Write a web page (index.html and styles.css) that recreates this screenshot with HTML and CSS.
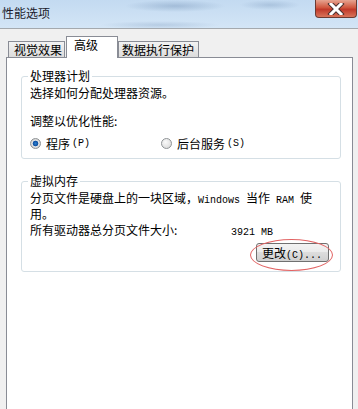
FILE: index.html
```html
<!DOCTYPE html>
<html lang="zh-CN">

<head>
    <meta charset="UTF-8">
    <meta name="viewport" content="width=device-width, initial-scale=1.0">
    <title>性能选项</title>
    <link rel="stylesheet" href="styles.css">
</head>

<body>
    <div class="titlebar">
        <span class="title">性能选项</span>
        <span class="close">
            <svg width="20" height="12" viewBox="0 0 20 12">
                <path d="M5 1 L15 11 M15 1 L5 11" stroke="#4a3030" stroke-width="5" stroke-linecap="square" />
                <path d="M5 1 L15 11 M15 1 L5 11" stroke="#ffffff" stroke-width="3" stroke-linecap="square" />
            </svg>
        </span>
    </div>

    <div class="tabs">
        <span class="tab">视觉效果</span>
        <span class="tab active">高级</span>
        <span class="tab last">数据执行保护</span>
    </div>

    <div class="panel">
        <fieldset class="group">
            <legend>处理器计划</legend>
            <p class="line first">选择如何分配处理器资源。</p>
            <p class="line label">调整以优化性能:</p>
            <div class="radios">
                <label class="radio"><span class="dot checked"></span>程序<span class="en">(P)</span></label>
                <label class="radio second"><span class="dot"></span>后台服务<span class="en">(S)</span></label>
            </div>
        </fieldset>

        <fieldset class="group memory">
            <legend>虚拟内存</legend>
            <p class="line">分页文件是硬盘上的一块区域，<span class="en">Windows </span>当作<span class="en"> RAM </span>使<br>用。</p>
            <p class="line total"><span class="size-label">所有驱动器总分页文件大小:</span><span class="en">3921 MB</span></p>
            <div class="actions">
                <button class="btn">更改<span class="en">(C)...</span><span class="mark"></span></button>
            </div>
        </fieldset>
    </div>
</body>

</html>
```

FILE: styles.css
```css
body {
    margin: 0;
    background-color: #f0f0f0;
    font-family: "Noto Sans CJK SC", sans-serif;
    font-size: 12px;
    line-height: 15px;
    color: #000;
    overflow: hidden;
}

.en {
    font-family: "Liberation Mono", monospace;
    font-size: 10px;
    line-height: 10px;
    white-space: pre;
}

.titlebar {
    height: 28px;
    display: flex;
    justify-content: space-between;
    align-items: flex-start;
    border-bottom: 1px solid #a4a9ae;
    background:
        radial-gradient(ellipse 50px 6px at 175px 6px, rgba(120, 150, 185, .45), transparent),
        radial-gradient(ellipse 30px 5px at 270px 5px, rgba(120, 150, 185, .35), transparent),
        radial-gradient(ellipse 60px 4px at 160px 25px, rgba(120, 150, 185, .3), transparent),
        linear-gradient(#c3daf1, #d3e5f6);
}

.title {
    margin: 5px 0 0 2px;
    color: #1a1a2a;
}

.close {
    width: 42px;
    height: 18px;
    margin-right: 1px;
    display: flex;
    justify-content: center;
    align-items: center;
    border: 1px solid #6b3a32;
    border-top: none;
    border-radius: 0 0 4px 4px;
    box-sizing: border-box;
    background: linear-gradient(#e6a491, #d0563e 45%, #c0392a 55%, #d9745a);
}

.tabs {
    display: flex;
    align-items: flex-end;
    margin: 7px 0 0 8px;
    position: relative;
    z-index: 1;
    white-space: nowrap;
}

.tab {
    width: 57px;
    height: 16px;
    padding: 0 0 0 5px;
    box-sizing: border-box;
    border: 1px solid #898c95;
    border-bottom: none;
    background: linear-gradient(#f2f2f2, #dcdcdc);
    line-height: 16px;
}

.tab.active {
    height: 22px;
    width: 52px;
    margin: 0 0 -1px 1px;
    padding-left: 7px;
    background: #fff;
}

.tab.last {
    width: 81px;
    padding-left: 3px;
}

.panel {
    margin-left: 6px;
    width: 347px;
    height: 360px;
    box-sizing: border-box;
    border: 1px solid #898c95;
    border-bottom: none;
    background: #fff;
    padding: 11px 0 0 14px;
}

.group {
    width: 320px;
    box-sizing: border-box;
    margin: 0;
    padding: 0 0 7px 8px;
    border: 1px solid #d5dfe5;
    border-radius: 3px;
}

.group legend {
    padding: 0 2px;
    margin-left: -2px;
    line-height: 14px;
}

.line {
    margin: 0;
}

.line.first {
    margin-top: 2px;
}

.line.label {
    margin-top: 13px;
}

.radios {
    display: flex;
    margin-top: 8px;
}

.radio {
    display: flex;
    align-items: center;
}

.radio.second {
    margin-left: 71px;
}

.radio .en {
    margin-left: 2px;
}

.dot {
    width: 11px;
    height: 11px;
    margin-right: 5px;
    border-radius: 50%;
    border: 1px solid #8f9396;
    box-sizing: border-box;
    background: radial-gradient(circle at 40% 35%, #fafafa, #d4d4d4);
}

.dot.checked {
    background: radial-gradient(circle, #2b7fd0 0, #0d4fa0 2.5px, #e8e8e8 3.2px, #c8c8c8 5px);
}

.memory {
    margin-top: 15px;
    padding-bottom: 9px;
}

.memory .line {
    margin-top: 2px;
}

.memory .line.total {
    margin-top: 1px;
}

.size-label {
    display: inline-block;
    width: 201px;
}

.actions {
    display: flex;
    justify-content: flex-end;
    padding-right: 11px;
    margin-top: 5px;
}

.btn {
    position: relative;
    width: 73px;
    height: 19px;
    padding: 0 0 0 5px;
    text-align: left;
    font-family: "Noto Sans CJK SC", sans-serif;
    font-size: 12px;
    line-height: 15px;
    color: #000;
    border: 1px solid #707070;
    border-radius: 3px;
    background: linear-gradient(#f3f3f3, #ebebeb 45%, #dddddd 50%, #cfcfcf);
}

.mark {
    position: absolute;
    left: -7px;
    top: -5px;
    width: 83px;
    height: 32px;
    border: 1px solid #e26464;
    border-radius: 50%;
    box-sizing: border-box;
}
```
